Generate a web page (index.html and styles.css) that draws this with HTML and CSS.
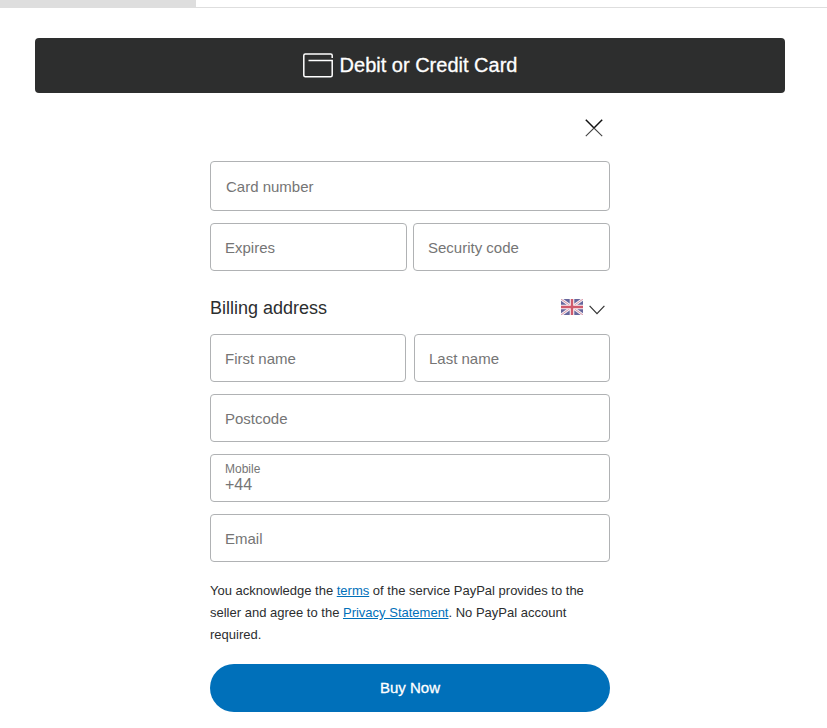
FILE: index.html
```html
<!DOCTYPE html>
<html lang="en">
<head>
	<meta charset="utf-8">
	<meta name="viewport" content="width=device-width, initial-scale=1">
	<title>Checkout</title>

	<link rel="stylesheet" href="styles.css">
</head>
<body>
	<div class="top-bar"><div class="tab"></div></div>
	<main>
		<button class="card-button" type="button">
			<svg class="card-icon" width="30" height="25" viewBox="0 0 30 25" fill="none" stroke="#fff" stroke-width="1.5">
				<path d="M29.2 5V2.5Q29.2 1 27.7 1H2.3Q.8 1 .8 2.5V22.2Q.8 23.7 2.3 23.7H27.7Q29.2 23.7 29.2 22.2V7.5H5.5"/>
			</svg>
			<span>Debit or Credit Card</span>
		</button>

		<form class="card-form">
			<div class="close-row">
				<svg class="close" width="18" height="18" viewBox="0 0 18 18" fill="none">
					<path d="M.8.8 9 9 17.2.8" stroke="#111" stroke-width="1.5"/>
					<path d="M.8 17.2 9 9 17.2 17.2" stroke="#444" stroke-width="1.1"/>
				</svg>
			</div>

			<div class="field card-number"><span>Card number</span></div>
			<div class="row card-row">
				<div class="field"><span>Expires</span></div>
				<div class="field"><span>Security code</span></div>
			</div>

			<div class="billing">
				<h2>Billing address</h2>
				<div class="country">
					<svg class="flag" width="22" height="16" viewBox="0 0 22 16">
						<rect width="22" height="16" fill="#66669c"/>
						<path d="M0 0 22 16M22 0 0 16" stroke="#f5f0f5" stroke-width="2.8"/>
						<path d="M0 0 22 16M22 0 0 16" stroke="#d995a5" stroke-width="1"/>
						<path d="M11 0V16M0 8H22" stroke="#faf5f7" stroke-width="4.6"/>
						<path d="M11 0V16M0 8H22" stroke="#cf5a6c" stroke-width="2.4"/>
					</svg>
					<svg class="arrow" width="16" height="10" viewBox="0 0 16 10" fill="none" stroke="#333" stroke-width="1.2">
						<path d="M.6.8 8 8.6 15.4.8"/>
					</svg>
				</div>
			</div>

			<div class="row name-row">
				<div class="field"><span>First name</span></div>
				<div class="field"><span>Last name</span></div>
			</div>
			<div class="field"><span>Postcode</span></div>
			<div class="field mobile">
				<span class="label">Mobile</span>
				<span>+44</span>
			</div>
			<div class="field"><span>Email</span></div>

			<p class="legal">You acknowledge the <a href="#">terms</a> of the service PayPal provides to the seller and agree to the <a href="#">Privacy Statement</a>. No PayPal account required.</p>
			<button class="buy" type="button">Buy Now</button>
		</form>
	</main>
</body>
</html>
```

FILE: styles.css
```css
* {
	margin: 0;
	box-sizing: border-box;
}

body {
	font-family: "Liberation Sans", Arial, sans-serif;
	background: #fff;
	color: #2c2e2f;
}

.top-bar {
	height: 8px;
	border-bottom: 1px solid #dedede;
}

.tab {
	width: 196px;
	height: 8px;
	background: #dedede;
}

main {
	width: 750px;
	margin: 30px 0 0 35px;
}

.card-button {
	display: flex;
	align-items: center;
	justify-content: center;
	gap: 7px;
	width: 100%;
	height: 55px;
	padding: 0;
	border: none;
	border-radius: 4px;
	background: #2d2e2e;
	color: #fff;
	font-family: inherit;
	font-size: 20px;
}

.card-button span {
	-webkit-text-stroke: .3px #fff;
}

.card-form {
	width: 400px;
	margin: 0 auto;
}

.close-row {
	display: flex;
	justify-content: flex-end;
	height: 68px;
	padding: 26px 7px 0 0;
}

.field {
	display: flex;
	align-items: center;
	height: 48px;
	margin-bottom: 12px;
	padding: 0 14px;
	border: 1px solid #b0b2b4;
	border-radius: 4px;
	color: #757575;
	font-size: 15px;
}

.card-number {
	height: 50px;
	padding-left: 15px;
}

.row {
	display: flex;
	gap: 8px;
}

.row .field {
	flex: 1;
}

.card-row {
	gap: 6px;
}

.billing {
	display: flex;
	justify-content: space-between;
	height: 51px;
	padding-top: 14px;
}

h2 {
	font-size: 18px;
	font-weight: normal;
	line-height: 22px;
}

.country {
	display: flex;
	gap: 6px;
	padding: 2px 5px 0 0;
}

.arrow {
	margin-top: 6px;
}

.mobile {
	flex-direction: column;
	align-items: flex-start;
	padding-top: 7px;
	font-size: 16px;
	line-height: 17px;
}

.mobile .label {
	font-size: 12px;
	line-height: 14px;
}

.legal {
	margin-top: 18px;
	font-size: 13px;
	line-height: 22px;
}

.legal a {
	color: #0070ba;
}

.buy {
	display: block;
	width: 100%;
	height: 48px;
	margin-top: 18px;
	padding: 0 0 2px;
	border: none;
	border-radius: 24px;
	background: #0070ba;
	color: #fff;
	font-family: inherit;
	font-size: 15px;
	-webkit-text-stroke: .3px #fff;
}
```
